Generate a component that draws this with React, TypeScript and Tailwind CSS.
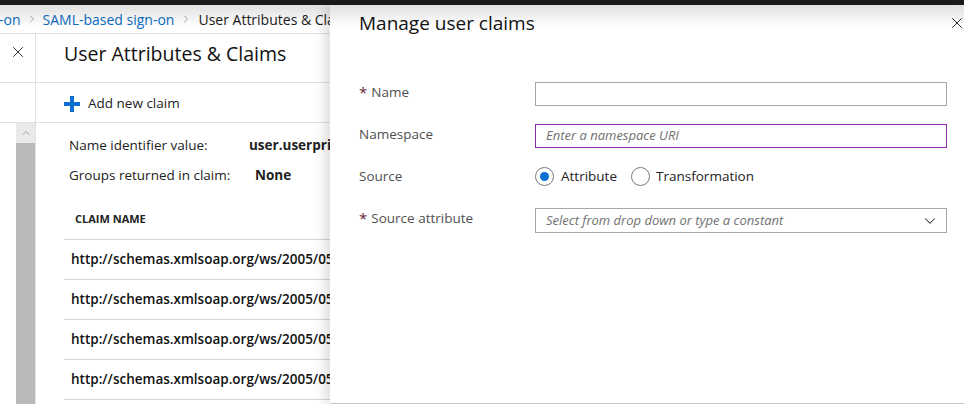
import { ChevronDown, ChevronRight, ChevronUp, X } from "lucide-react";

const font = { fontFamily: '"Open Sans", "Noto Sans", sans-serif' };

const rows = [1, 2, 3, 4];

function Breadcrumb() {
  return (
    <div className="flex h-[29px] items-center whitespace-nowrap border-b border-[#e1e1e1] text-[14px]">
      <span className="-ml-[1px] shrink-0 text-[#0b6bc4]">-on</span>
      <ChevronRight className="mx-[5px] h-3 w-3 shrink-0 text-[#8a8a8a]" strokeWidth={1.5} />
      <span className="shrink-0 text-[#0b6bc4]">SAML-based sign-on</span>
      <ChevronRight className="mx-[6px] h-3 w-3 shrink-0 text-[#8a8a8a]" strokeWidth={1.5} />
      <span className="shrink-0 text-[#1b1b1b]">User Attributes &amp; Claims</span>
    </div>
  );
}

function ClaimsBlade() {
  return (
    <div className="flex h-[370px]">
      <div className="flex w-[36px] shrink-0 flex-col border-r border-[#e1e1e1]">
        <div className="flex h-[49px] justify-center border-b border-[#e1e1e1] pt-[9px]">
          <X className="h-[18px] w-[18px] text-[#333]" strokeWidth={1.3} />
        </div>
        <div className="h-[40px] border-b border-[#e1e1e1]" />
        <div className="flex flex-1">
          <div className="w-4" />
          <div className="flex w-[19px] flex-col">
            <div className="flex h-[20px] items-center justify-center bg-[#e9e9e9]">
              <ChevronUp className="h-3 w-3 text-[#8a8a8a]" strokeWidth={1.5} />
            </div>
            <div className="flex-1 bg-[#b9b9b9]" />
          </div>
        </div>
      </div>
      <div className="flex min-w-0 flex-1 flex-col">
        <div className="h-[49px] whitespace-nowrap border-b border-[#e1e1e1] pl-[28px] pt-[5px] text-[19.5px] font-medium text-[#111]">
          User Attributes &amp; Claims
        </div>
        <div className="flex h-[40px] items-center gap-[8px] border-b border-[#e1e1e1] pl-[28px] pt-[2px] text-[13.5px] text-[#222]">
          <svg width="16" height="16" viewBox="0 0 16 16">
            <path d="M6 0h4v6h6v4h-6v6H6v-6H0V6h6z" fill="#0b6fcf" />
          </svg>
          Add new claim
        </div>
        <div className="pl-[28px] pt-[10px] text-[13.5px] text-[#222]">
          <div className="flex h-[24px] items-center whitespace-nowrap pl-[5px]">
            <span className="w-[180px] shrink-0">Name identifier value:</span>
            <span className="font-bold">user.userprincipalname</span>
          </div>
          <div className="mt-[6px] flex h-[24px] items-center whitespace-nowrap pl-[5px]">
            <span className="w-[186px] shrink-0">Groups returned in claim:</span>
            <span className="font-bold">None</span>
          </div>
          <div className="mt-[22px] flex h-[31px] items-center border-b border-[#d6d6d6] pb-[10px] pl-[11px] text-[11px] font-bold text-[#222]">
            CLAIM NAME
          </div>
          {rows.map((r) => (
            <div
              key={r}
              className="flex h-[40px] items-center whitespace-nowrap border-b border-[#d6d6d6] pl-[7px] text-[13.5px] font-semibold text-[#111]"
            >
              http://schemas.xmlsoap.org/ws/2005/05/identity/claims/emailaddress
            </div>
          ))}
        </div>
      </div>
    </div>
  );
}

function Label({ text, required }: { text: string; required?: boolean }) {
  return (
    <div className="flex w-[176px] shrink-0 items-center pb-[4px] text-[13.5px] text-[#505050]">
      {required && <span className="mr-[4px] text-[15px] leading-none text-[#6b1f3d]">*</span>}
      {text}
    </div>
  );
}

function ManageClaims() {
  return (
    <div className="absolute left-[330px] top-[5px] h-[399px] w-[634px] border-b border-[#c8c8c8] bg-white shadow-[-6px_0_10px_rgba(0,0,0,0.12)]">
      <div className="flex h-[36px] items-center justify-between pl-[29px]">
        <span className="text-[19px] font-medium text-[#111]">Manage user claims</span>
        <X className="-mr-[2px] h-[18px] w-[18px] text-[#222]" strokeWidth={1.3} />
      </div>
      <div className="flex flex-col gap-[18px] pl-[29px] pr-[17px] pt-[41px]">
        <div className="flex h-[24px]">
          <Label text="Name" required />
          <div className="h-[24px] flex-1 border border-[#a6a6a6]" />
        </div>
        <div className="flex h-[24px]">
          <Label text="Namespace" />
          <div className="flex h-[24px] flex-1 items-center border border-[#8a2aa6] pl-[10px] text-[13px] italic text-[#707070]">
            Enter a namespace URI
          </div>
        </div>
        <div className="flex h-[24px]">
          <Label text="Source" />
          <div className="flex items-center pb-[4px] text-[13.5px] text-[#222]">
            <span className="flex h-[19px] w-[19px] items-center justify-center rounded-full border border-[#7a7a7a]">
              <span className="h-[9px] w-[9px] rounded-full bg-[#0b6fcf]" />
            </span>
            <span className="ml-[7px]">Attribute</span>
            <span className="ml-[14px] h-[19px] w-[19px] rounded-full border border-[#7a7a7a]" />
            <span className="ml-[6px]">Transformation</span>
          </div>
        </div>
        <div className="flex h-[25px]">
          <Label text="Source attribute" required />
          <div className="flex h-[25px] flex-1 items-center justify-between border border-[#a6a6a6] pl-[10px] pr-[7px] text-[13px] italic text-[#707070]">
            Select from drop down or type a constant
            <ChevronDown className="h-[18px] w-[18px] text-[#333]" strokeWidth={1.4} />
          </div>
        </div>
      </div>
    </div>
  );
}

export default function App() {
  return (
    <div className="relative h-[404px] w-[964px] overflow-hidden bg-white" style={font}>
      <div className="h-[5px] bg-[#1b1b1b]" />
      <div className="w-[330px] overflow-hidden">
        <Breadcrumb />
        <ClaimsBlade />
      </div>
      <ManageClaims />
      <div className="pointer-events-none absolute left-0 top-[5px] h-[22px] w-full bg-gradient-to-b from-[rgba(0,0,0,0.12)] to-transparent" />
    </div>
  );
}
